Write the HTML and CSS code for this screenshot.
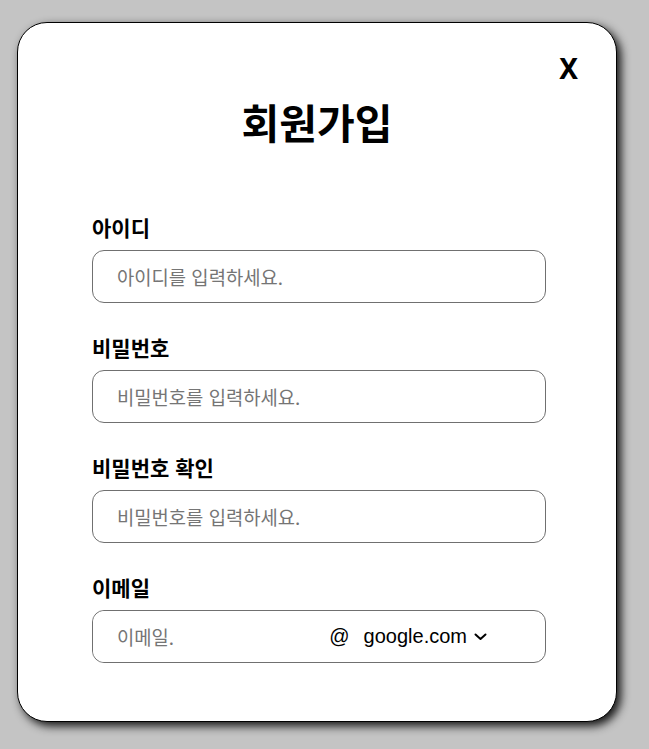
FILE: index.html
```html
<!DOCTYPE html>
<html lang="ko">
<head>
  <meta charset="UTF-8" />
  <meta name="viewport" content="width=device-width, initial-scale=1.0" />
  <title>회원가입</title>
  <link rel="stylesheet" href="styles.css">
</head>
<body>
  <div class="signup-modal">
    <button type="button" class="close-btn">X</button>
    <h2>회원가입</h2>
    <form class="signup-form">
      <div class="input-group">
        <label for="userId">아이디</label>
        <input type="text" id="userId" placeholder="아이디를 입력하세요." />
      </div>
      <div class="input-group">
        <label for="password">비밀번호</label>
        <input type="password" id="password" placeholder="비밀번호를 입력하세요." />
      </div>
      <div class="input-group">
        <label for="passwordCheck">비밀번호 확인</label>
        <input type="password" id="passwordCheck" placeholder="비밀번호를 입력하세요." />
      </div>
      <div class="input-group">
        <label for="email">이메일</label>
        <div class="email-box">
          <input type="text" id="email" placeholder="이메일." />
          <span class="at">@</span>
          <div class="domain-select">
            <span>google.com</span>
            <svg width="13" height="8" viewBox="0 0 13 8">
              <path d="M1.5 1.5 L6.5 6 L11.5 1.5" fill="none" stroke="#000" stroke-width="2" stroke-linecap="round" stroke-linejoin="round"/>
            </svg>
          </div>
        </div>
      </div>
    </form>
  </div>
</body>
</html>
```

FILE: styles.css
```css
* {
  margin: 0;
  padding: 0;
  box-sizing: border-box;
}

body {
  font-family: 'Noto Sans CJK KR', 'Noto Sans', sans-serif;
  background-color: #c4c4c4;
  padding: 22px 17px;
}

.signup-modal {
  position: relative;
  width: 600px;
  height: 700px;
  background-color: #ffffff;
  border: 1px solid #000;
  border-radius: 30px;
  box-shadow: 4px 4px 10px rgba(0, 0, 0, 0.9);
  padding-top: 78px;
}

.close-btn {
  position: absolute;
  top: 31px;
  right: 38px;
  background: none;
  border: none;
  font-family: 'Noto Sans', sans-serif;
  font-weight: 700;
  font-size: 28px;
  line-height: 1;
  color: #000;
  cursor: pointer;
}

h2 {
  font-weight: 700;
  font-size: 41px;
  line-height: 1;
  text-align: center;
  color: #000;
  margin-bottom: 75px;
}

.signup-form {
  width: 454px;
  margin-left: 74px;
  display: flex;
  flex-direction: column;
  gap: 34px;
}

.input-group label {
  display: block;
  font-weight: 700;
  font-size: 21px;
  line-height: 1;
  color: #000;
  margin-bottom: 12px;
}

.input-group input {
  display: block;
  width: 100%;
  height: 53px;
  padding: 0 24px;
  border: 1px solid #707070;
  border-radius: 12px;
  font-family: inherit;
  font-size: 18.8px;
  outline: none;
}

.input-group input::placeholder {
  color: #757575;
}

.email-box {
  display: flex;
  align-items: center;
  height: 53px;
  border: 1px solid #707070;
  border-radius: 12px;
  padding-right: 58px;
}

.email-box input {
  flex: 1;
  height: 100%;
  border: none;
  border-radius: 12px;
}

.at {
  font-family: 'Liberation Sans', sans-serif;
  font-size: 20px;
  margin-right: 14px;
}

.domain-select {
  display: flex;
  align-items: center;
  gap: 7px;
  font-family: 'Liberation Sans', sans-serif;
  font-size: 20px;
  cursor: pointer;
}
```
